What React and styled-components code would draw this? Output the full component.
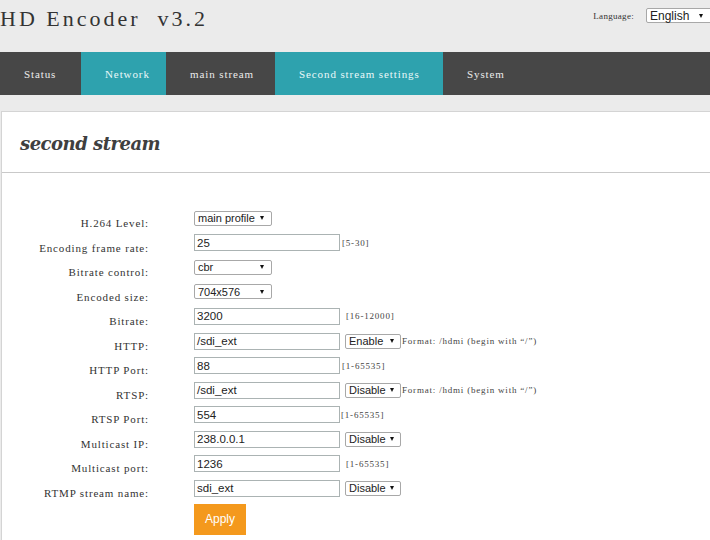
import React from 'react';
import styled, { createGlobalStyle } from 'styled-components';

const GlobalStyle = createGlobalStyle`
  html, body {
    margin: 0;
    padding: 0;
    background: #ebebeb;
    overflow: hidden;
  }
  * {
    box-sizing: border-box;
  }
`;

const Page = styled.div`
  width: 710px;
  min-height: 540px;
  background: #ebebeb;
`;

const Header = styled.div`
  height: 52px;
  display: flex;
  justify-content: space-between;
  align-items: flex-start;
`;

const Title = styled.h1`
  margin: 0;
  padding-top: 8px;
  font-family: "Liberation Serif", serif;
  font-weight: normal;
  font-size: 22px;
  line-height: 22px;
  letter-spacing: 3px;
  white-space: pre;
  color: #333;
`;

const LangGroup = styled.div`
  display: flex;
  align-items: center;
  gap: 12px;
  padding-top: 8px;
  margin-right: -4px;
`;

const LangLabel = styled.span`
  font-family: "Liberation Serif", serif;
  font-size: 9px;
  letter-spacing: 0.3px;
  color: #333;
`;

const Nav = styled.nav`
  display: flex;
  height: 43px;
  background: #474747;
`;

const Tab = styled.div`
  display: flex;
  align-items: center;
  flex: ${p => (p.$w ? `0 0 ${p.$w}px` : '1 1 auto')};
  padding-left: 24px;
  background: ${p => (p.$teal ? '#2ea2ae' : '#474747')};
  color: ${p => (p.$teal ? '#eaf8f9' : '#ececec')};
  font-family: "Liberation Serif", serif;
  font-size: 11px;
  letter-spacing: 0.9px;
  white-space: pre;
`;

const Panel = styled.section`
  margin: 16px -4px 0 1px;
  background: #fff;
  border-top: 1px solid #d4d4d4;
  border-left: 1px solid #d4d4d4;
  min-height: 430px;
`;

const PanelHeader = styled.div`
  height: 61px;
  display: flex;
  align-items: center;
  padding-left: 18px;
  border-bottom: 1px solid #c9c9c9;
`;

const PanelTitle = styled.h2`
  margin: 0;
  padding-top: 2px;
  font-family: "DejaVu Serif", serif;
  font-style: italic;
  font-weight: bold;
  font-size: 18px;
  letter-spacing: -0.5px;
  color: #3f3f3f;
`;

const Form = styled.div`
  display: grid;
  grid-template-columns: 147px auto;
  grid-auto-rows: 24.55px;
  column-gap: 45px;
  padding-top: 33px;
`;

const Label = styled.div`
  align-self: start;
  padding-top: 10px;
  line-height: 14px;
  text-align: right;
  font-family: "Liberation Serif", serif;
  font-size: 11px;
  letter-spacing: 0.85px;
  white-space: pre;
  color: #333;
`;

const Cell = styled.div`
  display: flex;
  align-items: center;
`;

const TextInput = styled.div`
  width: 146px;
  height: 17px;
  display: flex;
  align-items: center;
  padding-left: 2px;
  border: 1px solid #abb3b3;
  background: #fff;
  font-family: "Liberation Sans", Arial, sans-serif;
  font-size: 11.5px;
  color: #222;
`;

const SelectBox = styled.div`
  width: ${p => p.$w}px;
  height: 15px;
  margin-left: ${p => p.$ml || 0}px;
  display: flex;
  align-items: center;
  padding-left: 3px;
  border: 1px solid #a8a8a8;
  border-radius: 2px;
  background: #fff;
  font-family: "Liberation Sans", Arial, sans-serif;
  font-size: ${p => p.$fs || 11}px;
  color: #222;
  flex-shrink: 0;
`;

const Arrow = styled.span`
  margin-left: auto;
  margin-right: ${p => p.$mr || 7}px;
  width: 0;
  height: 0;
  border-left: 2.5px solid transparent;
  border-right: 2.5px solid transparent;
  border-top: 4px solid #111;
`;

const Hint = styled.span`
  margin-left: ${p => p.$ml || 2}px;
  font-family: "Liberation Serif", serif;
  font-size: 9px;
  letter-spacing: 0.8px;
  white-space: pre;
  color: #444;
`;

const ApplyButton = styled.button`
  grid-column: 2;
  margin-top: 3px;
  width: 52px;
  height: 31px;
  border: none;
  background: #f4991d;
  color: #fff;
  font-family: "Liberation Sans", Arial, sans-serif;
  font-size: 12px;
  padding: 0;
`;

const Select = ({ value, w, ml, mr, fs }) => (
  <SelectBox $w={w} $ml={ml} $fs={fs}>
    {value}
    <Arrow $mr={mr} />
  </SelectBox>
);

const rows = [
  { label: 'H.264 Level:', select: 'main profile' },
  { label: 'Encoding frame rate:', input: '25', hint: '[5-30]', hintGap: 2 },
  { label: 'Bitrate control:', select: 'cbr' },
  { label: 'Encoded size:', select: '704x576' },
  { label: 'Bitrate:', input: '3200', hint: '[16-12000]', hintGap: 6 },
  { label: 'HTTP:', input: '/sdi_ext', toggle: 'Enable', format: true },
  { label: 'HTTP Port:', input: '88', hint: '[1-65535]', hintGap: 0 },
  { label: 'RTSP:', input: '/sdi_ext', toggle: 'Disable', format: true },
  { label: 'RTSP Port:', input: '554', hint: '[1-65535]', hintGap: 1 },
  { label: 'Multicast IP:', input: '238.0.0.1', toggle: 'Disable' },
  { label: 'Multicast port:', input: '1236', hint: '[1-65535]', hintGap: 6 },
  { label: 'RTMP stream name:', input: 'sdi_ext', toggle: 'Disable' },
];

const tabs = [
  { name: 'Status', w: 81 },
  { name: 'Network', w: 85, teal: true },
  { name: 'main stream', w: 109 },
  { name: 'Second stream settings', w: 168, teal: true },
  { name: 'System' },
];

const App = () => (
  <Page>
    <GlobalStyle />
    <Header>
      <Title>{'HD Encoder  v3.2'}</Title>
      <LangGroup>
        <LangLabel>Language:</LangLabel>
        <Select value="English" w={68} fs={12} mr={10} />
      </LangGroup>
    </Header>

    <Nav>
      {tabs.map(t => (
        <Tab key={t.name} $w={t.w} $teal={t.teal}>{t.name}</Tab>
      ))}
    </Nav>

    <Panel>
      <PanelHeader>
        <PanelTitle>second stream</PanelTitle>
      </PanelHeader>
      <Form>
        {rows.map(r => (
          <React.Fragment key={r.label}>
            <Label>{r.label}</Label>
            <Cell>
              {r.select && <Select value={r.select} w={78} />}
              {r.input && <TextInput>{r.input}</TextInput>}
              {r.hint && <Hint $ml={r.hintGap}>{r.hint}</Hint>}
              {r.toggle && <Select value={r.toggle} w={56} ml={5} fs={11} mr={6} />}
              {r.format && <Hint $ml={1}>{'Format: /hdmi (begin with “/”)'}</Hint>}
            </Cell>
          </React.Fragment>
        ))}
        <ApplyButton>Apply</ApplyButton>
      </Form>
    </Panel>
  </Page>
);

export default App;
